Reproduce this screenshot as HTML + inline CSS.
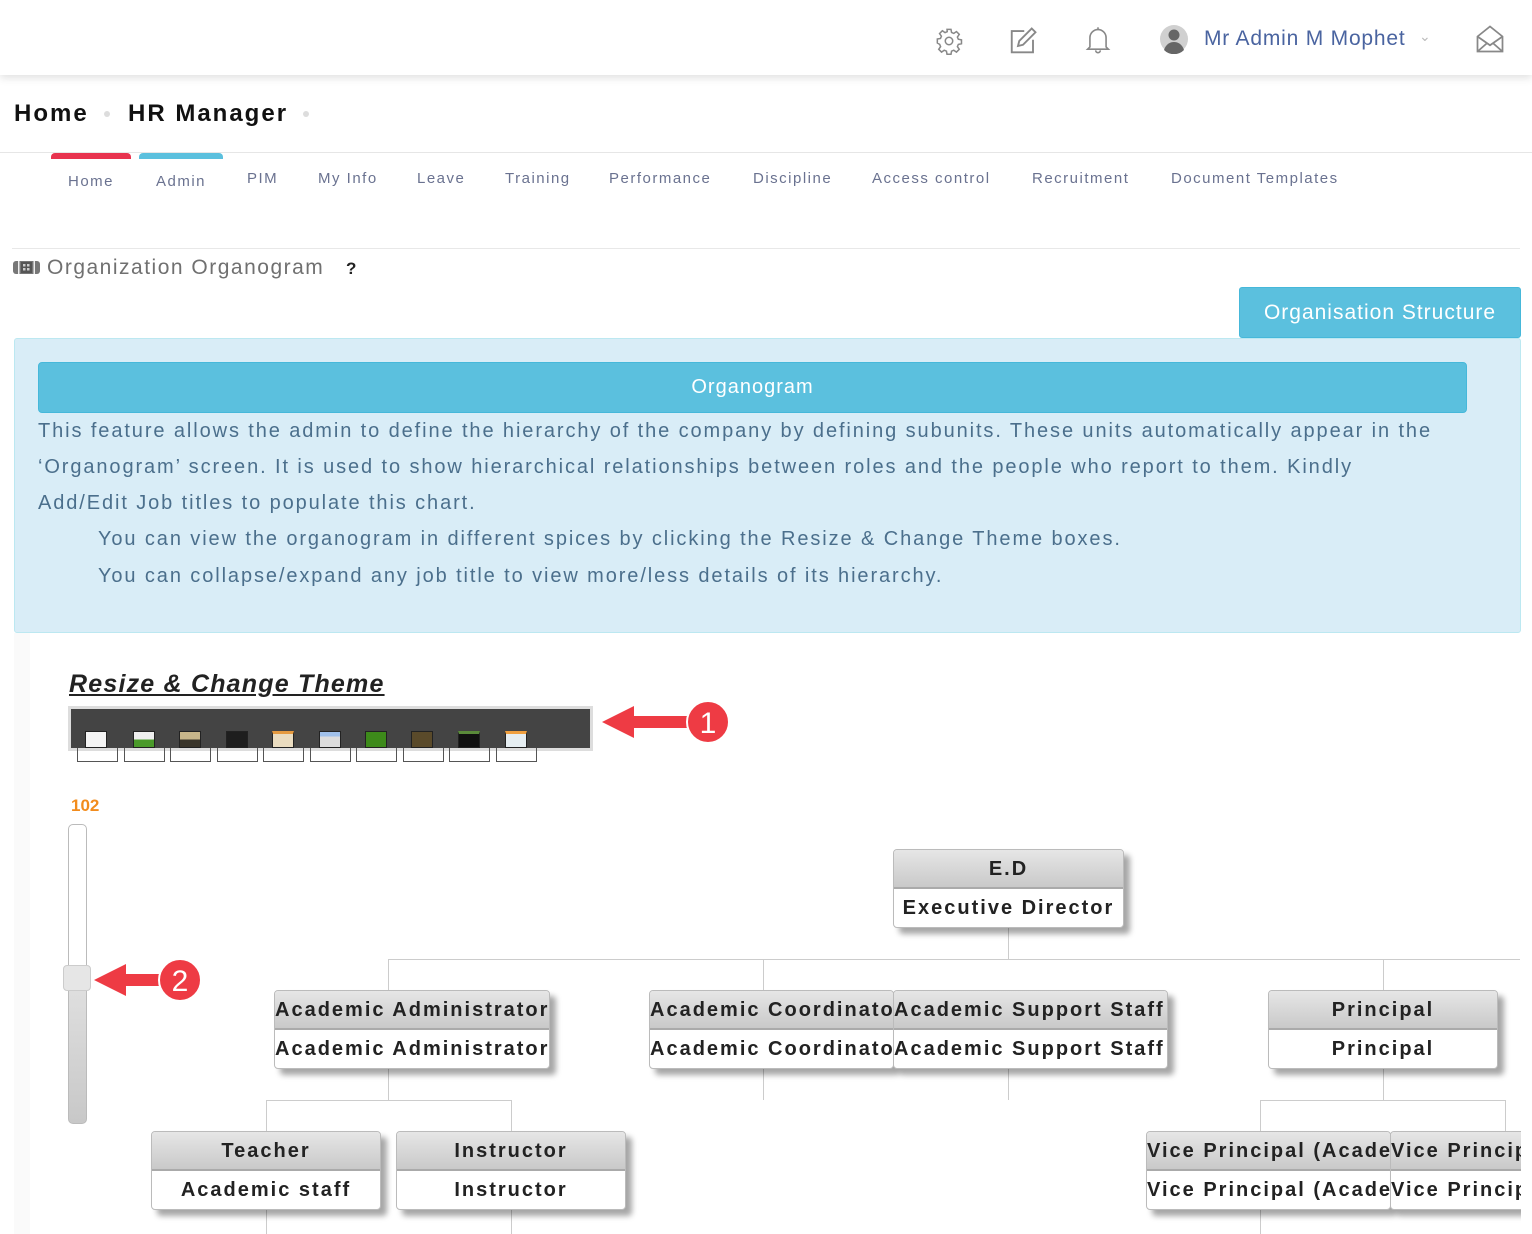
<!DOCTYPE html>
<html><head><meta charset="utf-8"><style>
*{box-sizing:border-box;margin:0;padding:0}
body{width:1532px;height:1234px;overflow:hidden;background:#fff;font-family:"Liberation Sans",sans-serif;position:relative}
.a{position:absolute;white-space:nowrap}
.top{position:absolute;left:0;top:0;width:1532px;height:75px;background:#fff;box-shadow:0 3px 8px rgba(0,0,0,.12)}
.nav{font-size:15px;color:#6a7290;letter-spacing:1.5px}
.info{font-size:20px;color:#4b6f8c;letter-spacing:1.9px}
.node{position:absolute;border:1px solid #bbb;border-radius:4px;background:#fff;box-shadow:6px 6px 6px rgba(0,0,0,.35);overflow:hidden;font-weight:bold;font-size:20px;color:#222;letter-spacing:2px;text-align:center}
.node .h{height:39px;line-height:38px;background:linear-gradient(#e6e6e6,#c9c9c9);border-bottom:2px solid #aaa;white-space:nowrap}
.node .b{height:38px;line-height:38px;white-space:nowrap}
.l{position:absolute;background:#ccc}
.th{position:absolute;top:731px;width:22px;height:17px;border:1px solid #222}
.bx{position:absolute;top:748px;width:41px;height:14px;border:1px solid #555;border-top:none}
</style></head><body>
<div class="top"></div>
<svg class="a" style="left:935px;top:27px" width="28" height="28" viewBox="0 0 24 24" fill="none" stroke="#888" stroke-width="1.3"><circle cx="12" cy="12" r="3.2"/><path d="M10.3 2h3.4l.5 2.7 1.9.8 2.3-1.6 2.4 2.4-1.6 2.3.8 1.9 2.7.5v3.4l-2.7.5-.8 1.9 1.6 2.3-2.4 2.4-2.3-1.6-1.9.8-.5 2.7h-3.4l-.5-2.7-1.9-.8-2.3 1.6-2.4-2.4 1.6-2.3-.8-1.9L2 13.7v-3.4l2.7-.5.8-1.9-1.6-2.3 2.4-2.4 2.3 1.6 1.9-.8z"/></svg>
<svg class="a" style="left:1008px;top:26px" width="30" height="30" viewBox="0 0 24 24" fill="none" stroke="#888" stroke-width="1.5"><path d="M13 4H3v17h17V11"/><path d="M19 2l3 3-10 10-4 1 1-4z"/></svg>
<svg class="a" style="left:1084px;top:25px" width="28" height="30" viewBox="0 0 24 26" fill="none" stroke="#888" stroke-width="1.4"><path d="M5 19V11a7 7 0 0 1 14 0v8l2 2H3z"/><path d="M10 22a2 2 0 0 0 4 0"/><path d="M12 2v2"/></svg>
<svg class="a" style="left:1159px;top:24px" width="30" height="30" viewBox="0 0 30 30"><circle cx="15" cy="15" r="14" fill="#d0d0d0"/><circle cx="15" cy="11" r="5.5" fill="#666"/><path d="M5 26c2-6 6-8 10-8s8 2 10 8a14 14 0 0 1-20 0z" fill="#666"/></svg>
<div class="a" style="left:1204px;top:27px;font-size:21px;color:#4a64a0;letter-spacing:.8px">Mr Admin M Mophet</div>
<div class="a" style="left:1419px;top:28px;font-size:14px;color:#bbb">&#8964;</div>
<svg class="a" style="left:1475px;top:24px" width="30" height="30" viewBox="0 0 24 24" fill="none" stroke="#888" stroke-width="1.4"><path d="M2 10l10-8 10 8v12H2z"/><path d="M2 10l10 7 10-7M2 22l8-7M22 22l-8-7"/></svg>

<div class="a" style="left:14px;top:100px;font-size:24px;font-weight:bold;color:#111;letter-spacing:2px">Home</div>
<div class="a" style="left:104px;top:111px;width:6px;height:6px;border-radius:3px;background:#ddd"></div>
<div class="a" style="left:128px;top:100px;font-size:24px;font-weight:bold;color:#111;letter-spacing:2px">HR Manager</div>
<div class="a" style="left:303px;top:111px;width:6px;height:6px;border-radius:3px;background:#ddd"></div>
<div class="a" style="left:0;top:152px;width:1532px;height:1px;background:#e6e6e6"></div>
<div class="a" style="left:51px;top:153px;width:80px;height:6px;background:#e8334f;border-radius:4px 4px 0 0"></div>
<div class="a" style="left:139px;top:153px;width:84px;height:6px;background:#5bc0de;border-radius:4px 4px 0 0"></div>
<div class="a nav" style="left:68px;top:173px">Home</div>
<div class="a nav" style="left:156px;top:173px">Admin</div>
<div class="a nav" style="left:247px;top:170px">PIM</div>
<div class="a nav" style="left:318px;top:170px">My Info</div>
<div class="a nav" style="left:417px;top:170px">Leave</div>
<div class="a nav" style="left:505px;top:170px">Training</div>
<div class="a nav" style="left:609px;top:170px">Performance</div>
<div class="a nav" style="left:753px;top:170px">Discipline</div>
<div class="a nav" style="left:872px;top:170px">Access control</div>
<div class="a nav" style="left:1032px;top:170px">Recruitment</div>
<div class="a nav" style="left:1171px;top:170px">Document Templates</div>
<div class="a" style="left:12px;top:248px;width:1508px;height:1px;background:#e8e8e8"></div>
<svg class="a" style="left:13px;top:261px" width="27" height="13" viewBox="0 0 27 13"><rect x="0" y="0" width="27" height="13" rx="3" fill="#777"/><rect x="8" y="1" width="11" height="11" fill="#555"/><rect x="10" y="3" width="2.5" height="2.5" fill="#ccc"/><rect x="14" y="3" width="2.5" height="2.5" fill="#ccc"/><rect x="10" y="7" width="2.5" height="2.5" fill="#ccc"/><rect x="14" y="7" width="2.5" height="2.5" fill="#ccc"/><rect x="5" y="0" width="1.5" height="13" fill="#eee"/><rect x="20.5" y="0" width="1.5" height="13" fill="#eee"/></svg>
<div class="a" style="left:47px;top:256px;font-size:21px;color:#707070;letter-spacing:1.5px">Organization Organogram</div>
<div class="a" style="left:346px;top:259px;font-size:17px;font-weight:bold;color:#222">?</div>
<div class="a" style="left:1239px;top:287px;width:282px;height:51px;background:#5bc0de;border:1px solid #46b8da;border-radius:3px;color:#fff;font-size:21px;text-align:center;line-height:49px;letter-spacing:1px">Organisation Structure</div>

<div class="a" style="left:14px;top:338px;width:1507px;height:295px;background:#d9edf7;border:1px solid #bce8f1;border-radius:3px"></div>
<div class="a" style="left:38px;top:362px;width:1429px;height:51px;background:#5bc0de;border:1px solid #46b8da;border-radius:4px;color:#fff;font-size:20px;text-align:center;line-height:49px;letter-spacing:1px">Organogram</div>
<div class="a info" style="left:38px;top:420px">This feature allows the admin to define the hierarchy of the company by defining subunits. These units automatically appear in the</div>
<div class="a info" style="left:38px;top:456px">‘Organogram’ screen. It is used to show hierarchical relationships between roles and the people who report to them. Kindly</div>
<div class="a info" style="left:38px;top:492px">Add/Edit Job titles to populate this chart.</div>
<div class="a info" style="left:98px;top:528px">You can view the organogram in different spices by clicking the Resize &amp; Change Theme boxes.</div>
<div class="a info" style="left:98px;top:565px">You can collapse/expand any job title to view more/less details of its hierarchy.</div>
<div class="a" style="left:14px;top:633px;width:16px;height:601px;background:#fafafa"></div>

<div class="a" style="left:69px;top:670px;font-size:25px;font-weight:bold;font-style:italic;color:#222;text-decoration:underline;letter-spacing:1.2px">Resize &amp; Change Theme</div>
<div class="a" style="left:68px;top:706px;width:525px;height:45px;background:#444;border:3px solid #ddd"></div>
<div class="th" style="left:85px;background:#f4f4f4"></div>
<div class="th" style="left:133px;background:linear-gradient(#eee 50%,#4a9a2a 50%)"></div>
<div class="th" style="left:179px;background:linear-gradient(#c8b68a 50%,#3a352a 50%)"></div>
<div class="th" style="left:226px;background:#1e1e1e"></div>
<div class="th" style="left:272px;background:#eadcc0;border-top:3px solid #e59a40"></div>
<div class="th" style="left:319px;background:linear-gradient(#a0c0ea 30%,#ddd 30%)"></div>
<div class="th" style="left:365px;background:#3d8a1a"></div>
<div class="th" style="left:411px;background:#5a4a2a"></div>
<div class="th" style="left:458px;background:#111;border-top:3px solid #5a8a3a"></div>
<div class="th" style="left:505px;background:#e6eef2;border-top:3px solid #f0a040"></div>
<div class="bx" style="left:77px"></div><div class="bx" style="left:124px"></div><div class="bx" style="left:170px"></div><div class="bx" style="left:217px"></div><div class="bx" style="left:263px"></div><div class="bx" style="left:310px"></div><div class="bx" style="left:356px"></div><div class="bx" style="left:403px"></div><div class="bx" style="left:449px"></div><div class="bx" style="left:496px"></div>
<svg class="a" style="left:600px;top:700px" width="135" height="48" viewBox="0 0 135 48"><path d="M2 22L34 6v10h60v12H34v10z" fill="#ee3b44"/><circle cx="108" cy="22" r="21" fill="#ee3b44" stroke="#fff" stroke-width="2"/><text x="108" y="33" font-size="30" fill="#fff" text-anchor="middle" font-family="Liberation Sans">1</text></svg>

<div class="a" style="left:71px;top:796px;font-size:17px;font-weight:bold;color:#f28c1d">102</div>
<div class="a" style="left:68px;top:824px;width:19px;height:300px;border:1px solid #bbb;border-radius:5px;background:linear-gradient(#fff 48%,#e0e0e0 52%,#c8c8c8)"></div>
<div class="a" style="left:63px;top:965px;width:28px;height:26px;border:1px solid #ccc;border-radius:4px;background:#e6e6e6"></div>
<svg class="a" style="left:92px;top:956px" width="112" height="48" viewBox="0 0 112 48"><path d="M2 24L34 8v10h40v12H34v10z" fill="#ee3b44"/><circle cx="88" cy="24" r="21" fill="#ee3b44" stroke="#fff" stroke-width="2"/><text x="88" y="35" font-size="30" fill="#fff" text-anchor="middle" font-family="Liberation Sans">2</text></svg>

<div class="l" style="left:1008px;top:928px;width:1px;height:31px"></div>
<div class="l" style="left:388px;top:959px;width:1132px;height:1px"></div>
<div class="l" style="left:388px;top:959px;width:1px;height:31px"></div>
<div class="l" style="left:763px;top:959px;width:1px;height:31px"></div>
<div class="l" style="left:1383px;top:959px;width:1px;height:31px"></div>
<div class="l" style="left:388px;top:1069px;width:1px;height:31px"></div>
<div class="l" style="left:763px;top:1069px;width:1px;height:31px"></div>
<div class="l" style="left:1008px;top:1069px;width:1px;height:31px"></div>
<div class="l" style="left:1383px;top:1069px;width:1px;height:31px"></div>
<div class="l" style="left:266px;top:1100px;width:246px;height:1px"></div>
<div class="l" style="left:266px;top:1100px;width:1px;height:134px"></div>
<div class="l" style="left:511px;top:1100px;width:1px;height:134px"></div>
<div class="l" style="left:1260px;top:1100px;width:246px;height:1px"></div>
<div class="l" style="left:1260px;top:1100px;width:1px;height:134px"></div>
<div class="l" style="left:1505px;top:1100px;width:1px;height:31px"></div>

<div class="node" style="left:893px;top:849px;width:231px"><div class="h">E.D</div><div class="b">Executive Director</div></div>
<div class="node" style="left:274px;top:990px;width:276px;text-align:left"><div class="h">Academic Administrator</div><div class="b">Academic Administrator</div></div>
<div class="node" style="left:649px;top:990px;width:245px;text-align:left"><div class="h">Academic Coordinator</div><div class="b">Academic Coordinator</div></div>
<div class="node" style="left:893px;top:990px;width:275px;text-align:left"><div class="h">Academic Support Staff</div><div class="b">Academic Support Staff</div></div>
<div class="node" style="left:1268px;top:990px;width:230px"><div class="h">Principal</div><div class="b">Principal</div></div>
<div class="node" style="left:151px;top:1131px;width:230px"><div class="h">Teacher</div><div class="b">Academic staff</div></div>
<div class="node" style="left:396px;top:1131px;width:230px"><div class="h">Instructor</div><div class="b">Instructor</div></div>
<div class="node" style="left:1146px;top:1131px;width:245px;text-align:left"><div class="h">Vice Principal (Academic)</div><div class="b">Vice Principal (Academic)</div></div>
<div class="node" style="left:1390px;top:1131px;width:160px;text-align:left"><div class="h">Vice Principal</div><div class="b">Vice Principal</div></div>
<div class="a" style="left:1521px;top:950px;width:11px;height:284px;background:#fff"></div>
</body></html>
